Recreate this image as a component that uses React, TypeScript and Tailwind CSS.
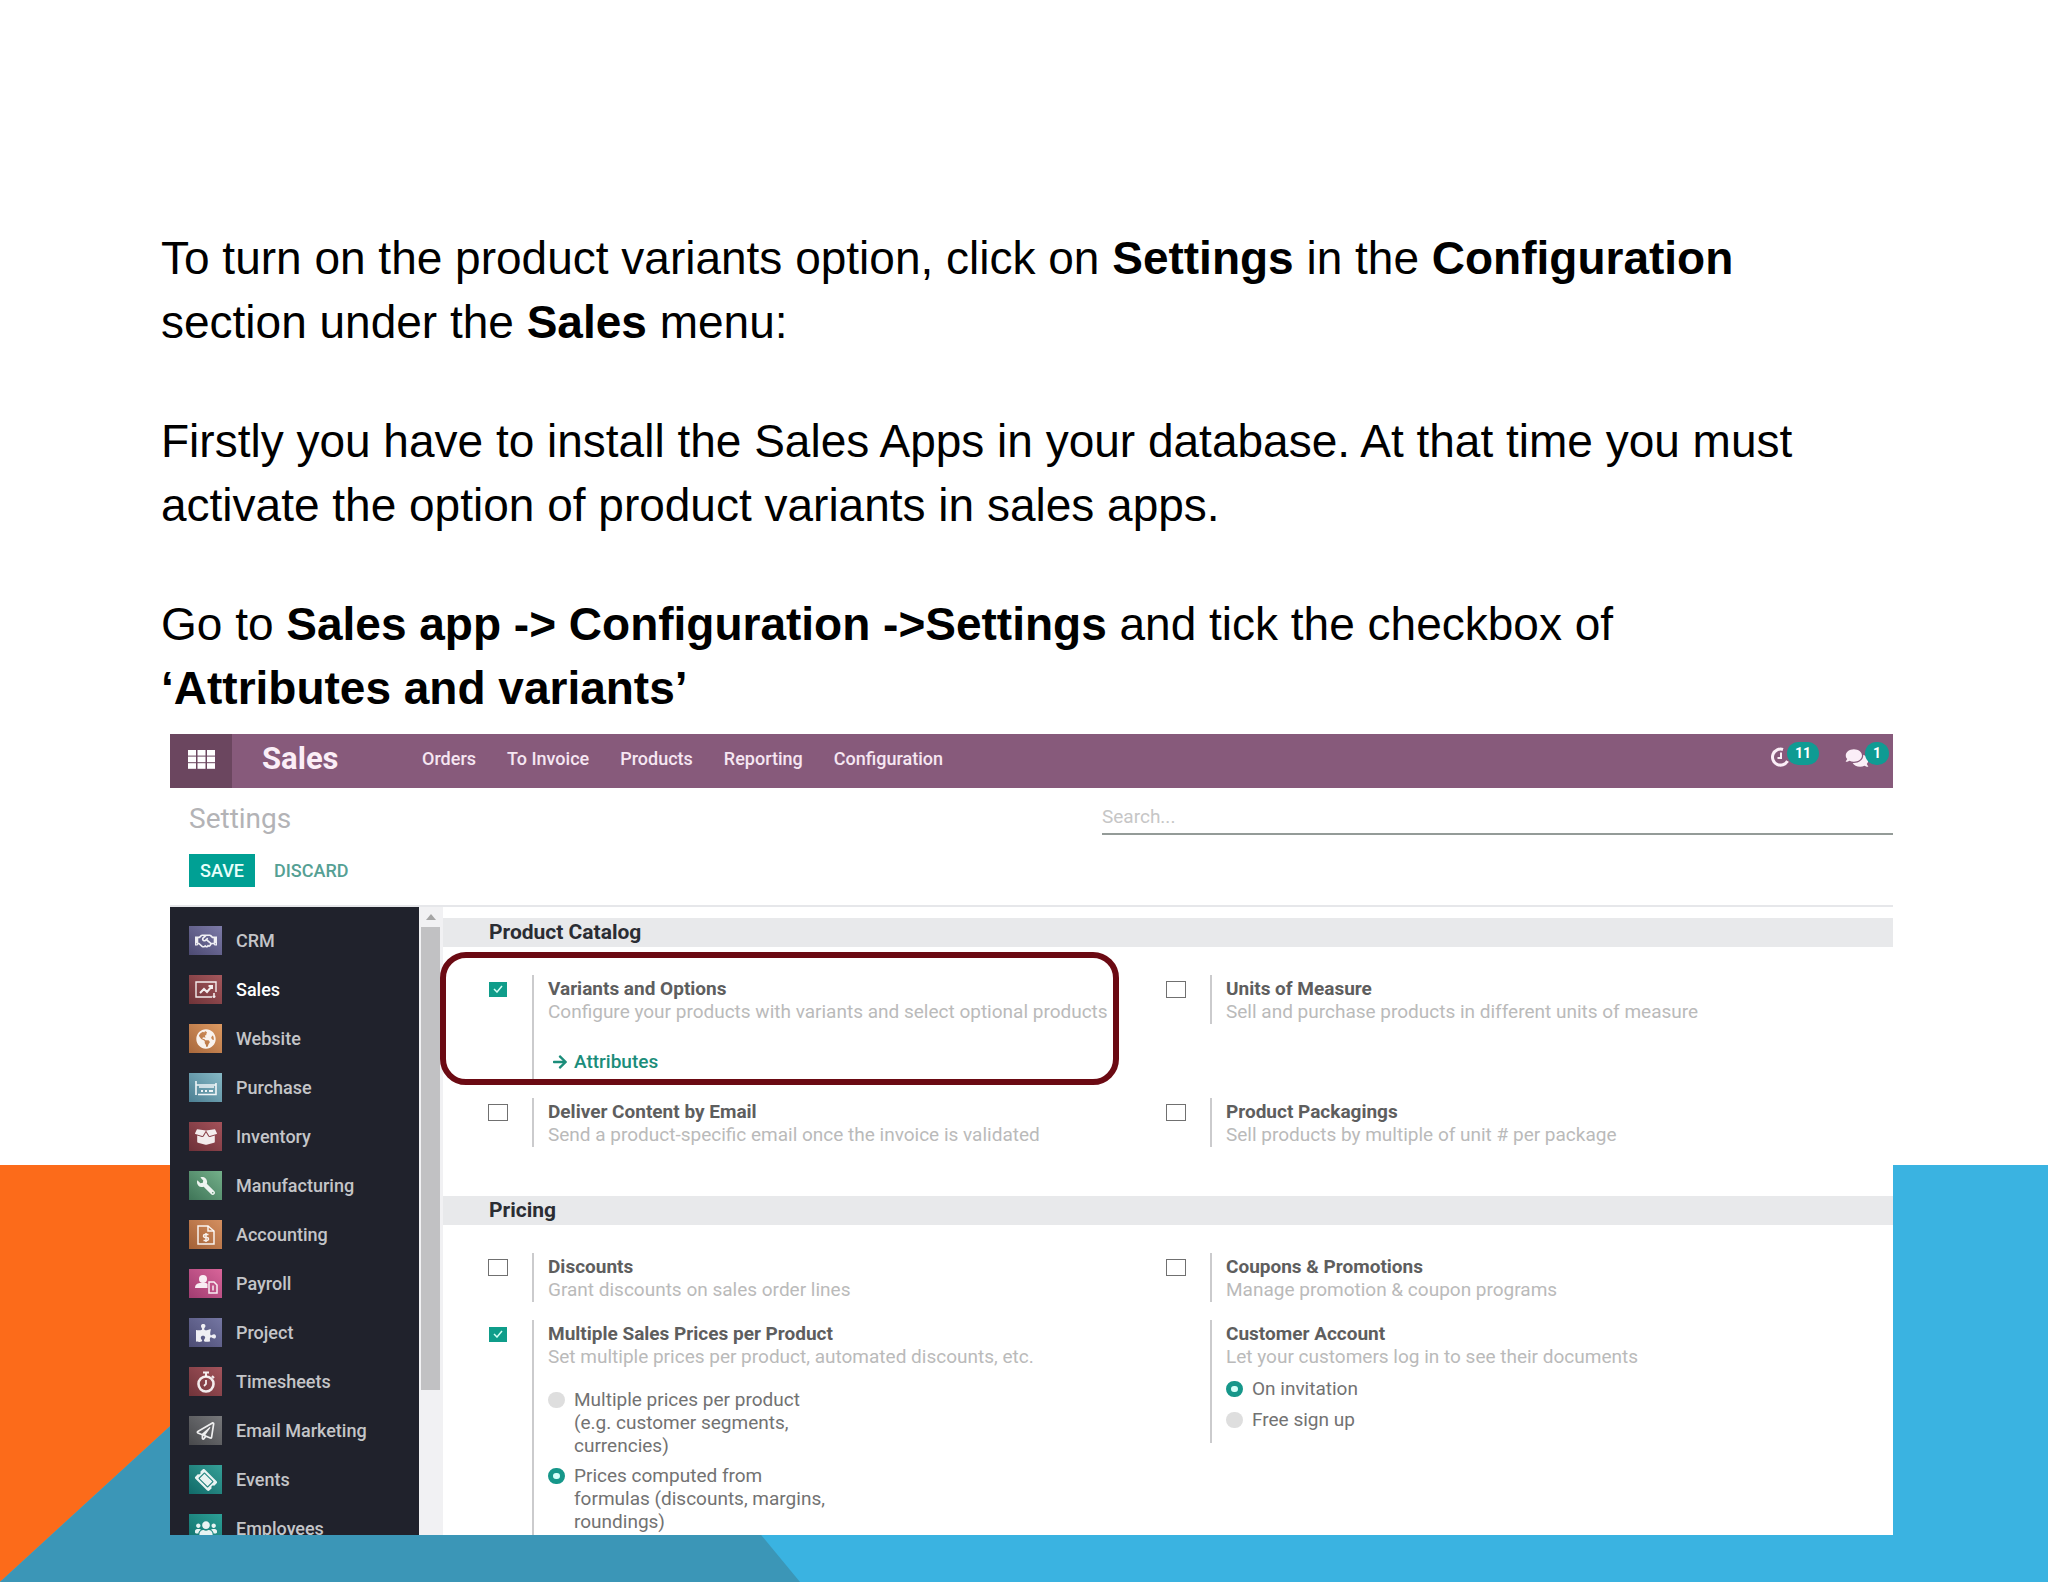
import { ReactNode, useState } from "react";
import {
  FaArrowRight,
  FaBoxOpen,
  FaComments,
  FaGlobeAmericas,
  FaPuzzlePiece,
  FaRegHandshake,
  FaRegPaperPlane,
  FaTicketAlt,
  FaUsers,
  FaWrench,
} from "react-icons/fa";

const SalesIcon = () => (
  <svg viewBox="0 0 22 18" className="w-[22px] h-[18px]" fill="none" stroke="currentColor">
    <path d="M17 16H1V1h20v10" strokeWidth="1.4" />
    <path d="M5 12l4-4 3 3 5-6M13.500 5H17v3" strokeWidth="2" />
    <path d="M19 12v5M17.500 15.500h3" strokeWidth="1.6" />
  </svg>
);

const PurchaseIcon = () => (
  <svg viewBox="0 0 22 16" className="w-[22px] h-[16px]" fill="none" stroke="currentColor">
    <path d="M1 1v14M1 5h20M3 14.500h18V3" strokeWidth="1.6" />
    <path d="M4 7h15" strokeWidth="1.500" />
    <path d="M6 11h2M10 11h2M14 11h4" strokeWidth="2" />
  </svg>
);

const AccountingIcon = () => (
  <svg viewBox="0 0 18 20" className="w-[18px] h-[20px]" fill="none" stroke="currentColor" strokeWidth="1.500">
    <path d="M1 1h10l6 5v13H1z" />
    <path d="M11 1v5h6" />
    <path d="M11.500 9.500H8a1.500 1.500 0 0 0 0 3h2a1.500 1.500 0 0 1 0 3H6.500M9 8v9" />
  </svg>
);

const PayrollIcon = () => (
  <svg viewBox="0 0 24 20" className="w-6 h-5">
    <circle cx="9" cy="5" r="4" fill="currentColor" />
    <path d="M1 14c0-4 3-5 6-5h4c1.500 0 2 .5 2.500 1v4z" fill="currentColor" />
    <path d="M15 8h5l3 3v8h-8z" fill="none" stroke="currentColor" strokeWidth="1.500" />
    <path d="M19 11.500v5" stroke="currentColor" strokeWidth="1.500" />
  </svg>
);

const TimerIcon = () => (
  <svg viewBox="0 0 22 22" className="w-[22px] h-[22px]" fill="none" stroke="currentColor">
    <circle cx="11" cy="13" r="7.500" strokeWidth="2.600" />
    <path d="M8 1.500h6M11 2v4M17 5l2 2" strokeWidth="2" />
    <path d="M11 9v4l-2 2" strokeWidth="1.800" />
  </svg>
);

const ActivityIcon = () => (
  <svg viewBox="0 0 22 22" className="w-[22px] h-[22px]" fill="none" stroke="currentColor">
    <path d="M14 3.500A8 8 0 1 0 18.500 15" strokeWidth="3" />
    <path d="M12 6.500v5.500H8.500" strokeWidth="2" />
  </svg>
);

const GridIcon = () => (
  <svg viewBox="0 0 27 19" className="w-[27px] h-[19px]" fill="currentColor">
    {[0, 1, 2].map((row) =>
      [0, 1, 2].map((col) => (
        <rect key={`${row}${col}`} x={col * 9.5} y={row * 6.6} width="8" height="5.6" />
      ))
    )}
  </svg>
);

const apps = [
  { name: "CRM", color: "from-[#4c4a72] to-[#7d7ba8]", icon: <FaRegHandshake className="w-[22px] h-[18px]" /> },
  { name: "Sales", color: "from-[#6f3338] to-[#a4575c]", icon: <SalesIcon />, active: true },
  { name: "Website", color: "from-[#a8683c] to-[#dd9a62]", icon: <FaGlobeAmericas className="w-5 h-5" /> },
  { name: "Purchase", color: "from-[#4c7f92] to-[#86b9c6]", icon: <PurchaseIcon /> },
  { name: "Inventory", color: "from-[#6d3038] to-[#a4525a]", icon: <FaBoxOpen className="w-[22px] h-[18px]" /> },
  { name: "Manufacturing", color: "from-[#3f7558] to-[#74b08a]", icon: <FaWrench className="w-[18px] h-[18px] -scale-x-100" /> },
  { name: "Accounting", color: "from-[#a36136] to-[#d48f60]", icon: <AccountingIcon /> },
  { name: "Payroll", color: "from-[#a03c70] to-[#d9659a]", icon: <PayrollIcon /> },
  { name: "Project", color: "from-[#4c4c74] to-[#7577a3]", icon: <FaPuzzlePiece className="w-[20px] h-[18px]" /> },
  { name: "Timesheets", color: "from-[#70343a] to-[#a4545c]", icon: <TimerIcon /> },
  { name: "Email Marketing", color: "from-[#47484b] to-[#77787b]", icon: <FaRegPaperPlane className="w-[19px] h-[18px]" /> },
  { name: "Events", color: "from-[#106a68] to-[#35a098]", icon: <FaTicketAlt className="w-5 h-5 rotate-45" /> },
  { name: "Employees", color: "from-[#106f6c] to-[#2ca096]", icon: <FaUsers className="w-[22px] h-[18px]" /> },
];

const menu = ["Orders", "To Invoice", "Products", "Reporting", "Configuration"];

interface SettingProps {
  id: string;
  title: string;
  description: string;
  checkbox?: boolean;
  defaultChecked?: boolean;
  children?: ReactNode;
}

const Setting = ({ id, title, description, checkbox = true, defaultChecked = false, children }: SettingProps) => {
  const [checked, setChecked] = useState(defaultChecked);

  return (
    <div className="flex mb-[18px]">
      <div className="w-11 shrink-0 pt-1.5">
        {checkbox && (
          <span className="relative flex w-5 h-[17px]">
            <input
              id={id}
              type="checkbox"
              checked={checked}
              onChange={() => setChecked(!checked)}
              className="appearance-none w-full h-full bg-white border border-[#707070] checked:bg-[#0f9d8a] checked:border-white"
            />
            {checked && (
              <svg viewBox="0 0 10 8" className="absolute left-[5px] top-1 w-2.5 h-2 pointer-events-none">
                <path d="M1 4l3 3 5-6" fill="none" stroke="#d5fff5" strokeWidth="1.500" />
              </svg>
            )}
          </span>
        )}
      </div>
      <div className="border-l-2 border-[#cbcbcd] pt-0.5 pl-3.5 min-h-[49px] text-[19px] leading-[23px]">
        {checkbox ? (
          <label htmlFor={id} className="block font-bold text-[#5e5e5e]">
            {title}
          </label>
        ) : (
          <h3 className="font-bold text-[#5e5e5e]">{title}</h3>
        )}
        <p className="text-[#bababa]">{description}</p>
        {children}
      </div>
    </div>
  );
};

interface RadioProps {
  name: string;
  label: string;
  defaultChecked?: boolean;
}

const Radio = ({ name, label, defaultChecked }: RadioProps) => (
  <label className="flex items-start gap-[9px] w-[284px] text-[#727272]">
    <input
      type="radio"
      name={name}
      defaultChecked={defaultChecked}
      className="appearance-none shrink-0 mt-1 w-[17px] h-4 rounded-full bg-[#dedede] checked:bg-[#d5fff9] checked:border-[5px] checked:border-[#16978a]"
    />
    {label}
  </label>
);

const SectionTitle = ({ children }: { children: ReactNode }) => (
  <h2 className="h-[29px] pl-[46px] bg-[#e8e9eb] text-[21px] leading-[29px] font-bold text-[#2b2d33]">{children}</h2>
);

const Sidebar = () => (
  <aside className="w-[249px] shrink-0 bg-[#20222c] pt-[9px] overflow-hidden">
    {apps.map((app) => (
      <a key={app.name} href="#" className="flex items-center gap-3.5 h-[49px] pl-[19px] text-[18px] font-medium">
        <span className={`flex items-center justify-center w-[33px] h-[29px] bg-linear-to-tr text-white/90 ${app.color}`}>
          {app.icon}
        </span>
        <span className={app.active ? "text-white" : "text-[#c4c5c8]"}>{app.name}</span>
      </a>
    ))}
  </aside>
);

const Scrollbar = () => (
  <div className="w-6 shrink-0 bg-[#f1f1f3] pl-0.5 pr-[3px]">
    <div className="flex items-center justify-center h-5">
      <svg viewBox="0 0 10 6" className="w-2.5 h-1.5">
        <path d="M0 6l5-6 5 6z" fill="#a5a5a5" />
      </svg>
    </div>
    <div className="h-[463px] bg-[#c1c1c3]" />
  </div>
);

const SalesSettings = () => (
  <section className="flex flex-col aspect-[1723/801] shrink-0 overflow-hidden bg-white font-['Roboto',sans-serif]">
    <nav className="flex items-center shrink-0 h-[54px] bg-[#875a7b] text-white">
      <button aria-label="Apps" className="flex items-center justify-center w-[62px] h-full pb-1 bg-[#6b465f]">
        <GridIcon />
      </button>
      <a href="#" className="w-[190px] pl-[30px] pb-1 text-[31px] leading-9 font-bold text-[#fbeef7]">
        Sales
      </a>
      <div className="flex gap-[31px] pb-1.5 text-[18px] font-medium text-[#f6e6f2]">
        {menu.map((item) => (
          <a key={item} href="#">
            {item}
          </a>
        ))}
      </div>
      <div className="flex gap-[26px] ml-auto pr-1 pb-3 text-[14px] leading-[22px] font-bold">
        <button aria-label="Activities" className="relative flex w-[50px]">
          <span className="pt-1 text-[#fbeef7]">
            <ActivityIcon />
          </span>
          <span className="absolute right-0 top-0 w-8 h-[23px] rounded-full bg-[#0f9b93]">11</span>
        </button>
        <button aria-label="Messages" className="relative flex w-11">
          <span className="pt-1.5 text-[#fbeef7]">
            <FaComments className="w-6 h-5" />
          </span>
          <span className="absolute right-0 top-0 w-6 h-[23px] rounded-full bg-[#0f9b93]">1</span>
        </button>
      </div>
    </nav>

    <header className="flex shrink-0 h-[119px] border-b-2 border-[#e6e7ea] pl-[19px]">
      <div className="flex flex-col gap-[17px] pt-[13px]">
        <h1 className="text-[28px] leading-9 text-[#b3b3b6]">Settings</h1>
        <div className="flex text-[18px] leading-[33px]">
          <button className="w-[66px] h-[33px] bg-[#00a094] font-medium text-[#e8fffb]">SAVE</button>
          <button className="px-[19px] font-medium text-[#55a094]">DISCARD</button>
        </div>
      </div>
      <input
        type="text"
        aria-label="Search"
        placeholder="Search..."
        className="ml-auto w-[791px] h-[47px] pt-3 border-b-2 border-[#949b98] text-[19px] placeholder:text-[#c6c6c6] outline-none"
      />
    </header>

    <div className="flex flex-1 min-h-0">
      <Sidebar />
      <Scrollbar />
      <main className="flex-1 pt-[11px]">
        <SectionTitle>Product Catalog</SectionTitle>
        <div className="relative grid grid-cols-2 items-start pt-7 pb-[31px] pl-[45px] pr-[49px]">
          <div className="absolute top-[5px] -left-[3px] w-[679px] h-[133px] border-[6px] border-[#6b0a13] rounded-[26px] pointer-events-none" />
          <Setting
            id="variants"
            title="Variants and Options"
            description="Configure your products with variants and select optional products"
            defaultChecked
          >
            <a href="#" className="flex items-center gap-1.5 mt-[27px] mb-[7px] pl-1 font-medium text-[#1b8d7a]">
              <FaArrowRight className="w-4 h-4" />
              Attributes
            </a>
          </Setting>
          <Setting
            id="units"
            title="Units of Measure"
            description="Sell and purchase products in different units of measure"
          />
          <Setting
            id="email"
            title="Deliver Content by Email"
            description="Send a product-specific email once the invoice is validated"
          />
          <Setting
            id="packagings"
            title="Product Packagings"
            description="Sell products by multiple of unit # per package"
          />
        </div>

        <SectionTitle>Pricing</SectionTitle>
        <div className="grid grid-cols-2 items-start pt-7 pl-[45px] pr-[49px]">
          <Setting id="discounts" title="Discounts" description="Grant discounts on sales order lines" />
          <Setting
            id="coupons"
            title="Coupons & Promotions"
            description="Manage promotion & coupon programs"
          />
          <Setting
            id="prices"
            title="Multiple Sales Prices per Product"
            description="Set multiple prices per product, automated discounts, etc."
            defaultChecked
          >
            <div className="flex flex-col gap-[7px] mt-5 pb-8">
              <Radio name="pricing" label="Multiple prices per product (e.g. customer segments, currencies)" />
              <Radio
                name="pricing"
                label="Prices computed from formulas (discounts, margins, roundings)"
                defaultChecked
              />
            </div>
          </Setting>
          <Setting
            id="account"
            title="Customer Account"
            description="Let your customers log in to see their documents"
            checkbox={false}
          >
            <div className="flex flex-col gap-2 mt-[9px] pb-3">
              <Radio name="account" label="On invitation" defaultChecked />
              <Radio name="account" label="Free sign up" />
            </div>
          </Setting>
        </div>
      </main>
    </div>
  </section>
);

const Backdrop = () => (
  <svg viewBox="0 0 2048 417" preserveAspectRatio="none" className="absolute bottom-0 left-0 w-full h-[417px]">
    <rect width="2048" height="417" fill="#3ab3e1" />
    <path d="M0 0h455L0 417z" fill="#fc6b1a" />
    <path d="M455 0L800 417H0z" fill="#3b96b7" />
  </svg>
);

const App = () => {
  return (
    <div className="relative min-h-screen bg-white">
      <Backdrop />
      <div className="relative flex flex-col pt-[226px] pb-[47px] pl-[161px] pr-[155px]">
        <div className="flex flex-col gap-[55px] pr-10 font-['Liberation_Sans',Arial,sans-serif] text-[46px] leading-[64px] text-black">
          <p>
            To turn on the product variants option, click on <b>Settings</b> in the <b>Configuration</b> section under
            the <b>Sales</b> menu:
          </p>
          <p>
            Firstly you have to install the Sales Apps in your database. At that time you must activate the option of
            product variants in sales apps.
          </p>
          <p>
            Go to <b>Sales app -&gt; Configuration -&gt;Settings</b> and tick the checkbox of{" "}
            <b>‘Attributes and variants’</b>
          </p>
        </div>
        <div className="mt-3.5 ml-[9px]">
          <SalesSettings />
        </div>
      </div>
    </div>
  );
};

export default App;
